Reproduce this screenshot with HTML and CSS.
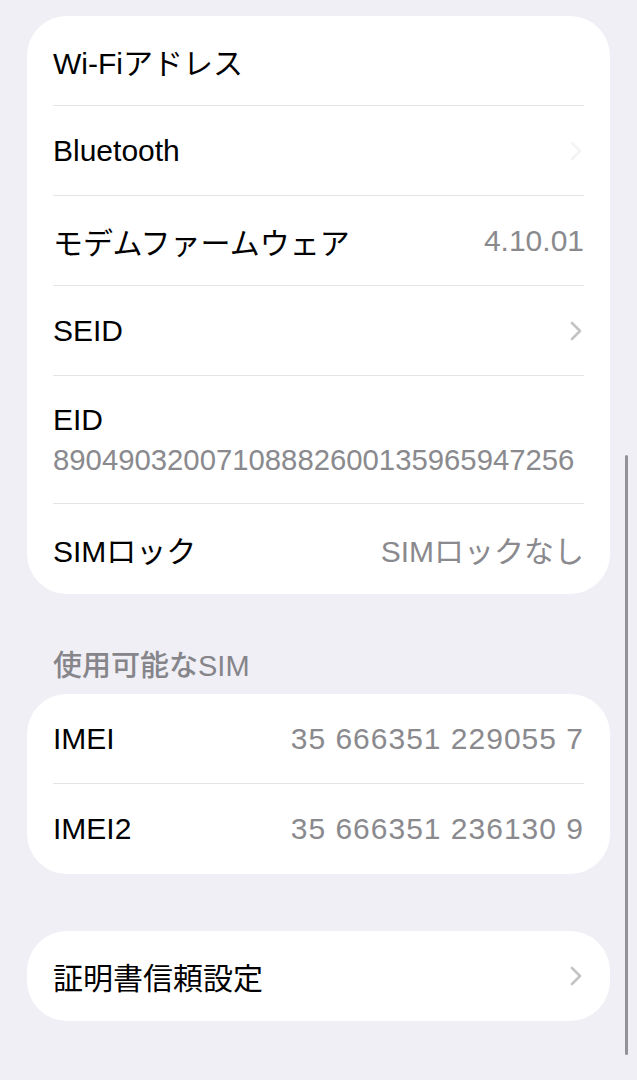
FILE: index.html
```html
<!DOCTYPE html>
<html lang="ja">
  <head>
    <meta charset="UTF-8" />
    <title>情報</title>
    <link rel="stylesheet" href="styles.css">
  </head>
  <body>
    <main class="settings">
      <section class="group">
        <div class="row">
          <span class="label">Wi-Fiアドレス</span>
        </div>
        <div class="row">
          <span class="label">Bluetooth</span>
          <svg class="chevron faint" width="14" height="20" viewBox="0 0 14 20">
            <path d="M3 2 L11 10 L3 18" />
          </svg>
        </div>
        <div class="row">
          <span class="label">モデムファームウェア</span>
          <span class="value">4.10.01</span>
        </div>
        <div class="row">
          <span class="label">SEID</span>
          <svg class="chevron" width="14" height="20" viewBox="0 0 14 20">
            <path d="M3 2 L11 10 L3 18" />
          </svg>
        </div>
        <div class="row row-tall">
          <span class="label">EID</span>
          <span class="value value-long">89049032007108882600135965947256</span>
        </div>
        <div class="row">
          <span class="label">SIMロック</span>
          <span class="value">SIMロックなし</span>
        </div>
      </section>

      <h3 class="group-title">使用可能なSIM</h3>
      <section class="group">
        <div class="row">
          <span class="label">IMEI</span>
          <span class="value value-num">35 666351 229055 7</span>
        </div>
        <div class="row">
          <span class="label">IMEI2</span>
          <span class="value value-num">35 666351 236130 9</span>
        </div>
      </section>

      <section class="group group-last">
        <div class="row">
          <span class="label">証明書信頼設定</span>
          <svg class="chevron" width="14" height="20" viewBox="0 0 14 20">
            <path d="M3 2 L11 10 L3 18" />
          </svg>
        </div>
      </section>
    </main>
    <div class="scroll-indicator"></div>
  </body>
</html>
```

FILE: styles.css
```css
body {
  margin: 0;
  background: #f0eff5;
  font-family: "Liberation Sans", "Noto Sans CJK JP", sans-serif;
  color: #000;
}
.settings {
  padding: 16px 27px 40px 27px;
}
.group {
  background: #fff;
  border-radius: 40px;
  padding: 0 26px;
}
.group + .group {
  margin-top: 57px;
}
.row {
  height: 90px;
  display: flex;
  align-items: center;
  justify-content: space-between;
  font-size: 30px;
  border-bottom: 1.5px solid #e4e4e7;
  box-sizing: border-box;
}
.row:last-child {
  border-bottom: none;
}
.row-tall {
  height: 128px;
  flex-direction: column;
  align-items: flex-start;
  justify-content: center;
  gap: 6px;
}
.label {
  white-space: nowrap;
}
.value {
  color: #8a8a8e;
  white-space: nowrap;
}
.value-num {
  letter-spacing: 1px;
}
.value-long {
  font-size: 29.3px;
}
.chevron {
  margin-right: 1px;
}
.chevron path {
  fill: none;
  stroke: #c4c4c7;
  stroke-width: 2.6;
  stroke-linecap: round;
  stroke-linejoin: round;
}
.chevron.faint path {
  stroke: #f3f3f5;
}
.group-title {
  margin: 54px 0 10px 26px;
  font-size: 29px;
  line-height: 36px;
  font-weight: 500;
  color: #85858a;
}
.scroll-indicator {
  position: absolute;
  left: 625px;
  top: 455px;
  width: 3px;
  height: 600px;
  border-radius: 2px;
  background: #939397;
}
```
